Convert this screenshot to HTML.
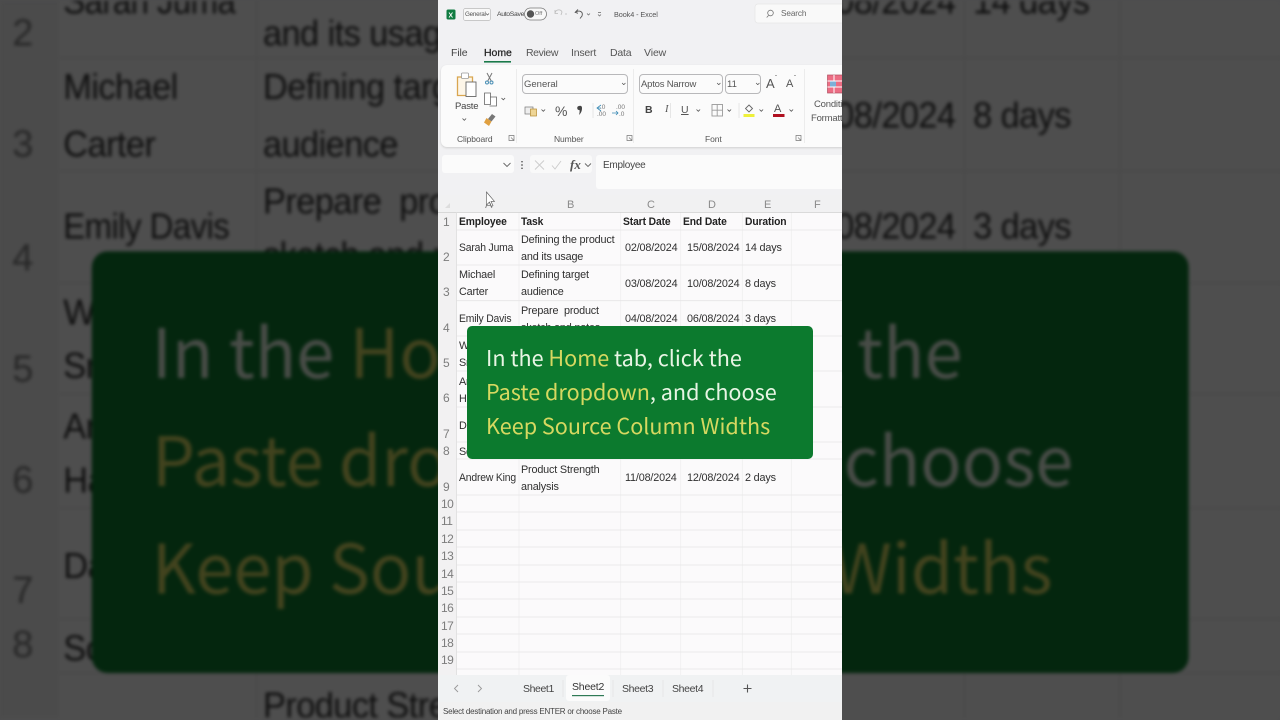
<!DOCTYPE html>
<html><head><meta charset="utf-8">
<style>
html,body{margin:0;padding:0;width:1280px;height:720px;overflow:hidden;background:#4d4d4e}
body{font-family:"Liberation Sans",sans-serif;position:relative}
#clip{position:absolute;left:0;top:0;width:1280px;height:720px;overflow:hidden;contain:strict}
.t{position:absolute;white-space:nowrap;line-height:1;color:#333}
#bg{position:absolute;left:438.1px;top:246.6px;width:403.8px;height:226.8px;overflow:hidden;background:#fbfafb;transform-origin:center center;transform:scale(3.17);filter:brightness(.31) blur(.55px)}
#bgi{position:absolute;left:-438.1px;top:-246.6px;width:0;height:0}
#frame{position:absolute;left:438px;top:0;width:404px;height:720px;overflow:hidden;background:#f1f1f3}
#inner{position:absolute;left:-438px;top:0;width:1280px;height:720px;filter:blur(.2px)}
.g{position:absolute;left:0;top:0;width:1280px;height:720px}
.c{font-size:11.4px;letter-spacing:-.18px;color:#303030;margin-top:1px;transform:scaleX(.95);transform-origin:0 0}
.n{transform:scaleX(.91)}
.b{font-weight:bold;color:#222;font-size:11.2px;letter-spacing:-.12px;margin-top:1px;transform:scaleX(.92);transform-origin:0 0}
.r{font-size:12px;color:#7d7d7d;letter-spacing:-.5px;margin-top:-1px}
.h{font-size:11px;color:#8a8a8a}
.m{font-size:9.5px;color:#444;letter-spacing:-.2px}
.s{font-size:8.5px;color:#555;letter-spacing:-.1px}
.box{position:absolute;border:1px solid #b8b8ba;border-radius:4px;background:#fbfbfb;box-sizing:border-box}
.cap{position:absolute;left:467px;top:326px;width:346px;height:133px;background:#0c7a2e;border-radius:5px}
.cap div{position:absolute;left:19px;white-space:nowrap;font-family:"Noto Sans CJK SC","DejaVu Sans",sans-serif;font-size:21.6px;line-height:1;color:#e8f5e4}
.y{color:#d6d860}
</style></head><body>
<div id="clip">

<div id="bg"><div id="bgi">
<svg style="position:absolute;left:438px;top:246px;width:404px;height:227px" viewBox="438 246 404 227"><g stroke="#e9e9e9" stroke-width=".5"><path d="M519 246V473M620.7 246V473M680.7 246V473M742.3 246V473M791.3 246V473M438 265H842M438 300.7H842M438 336H842M438 371H842M438 407H842M438 442H842M438 459H842"/></g><rect x="438" y="246" width="18.5" height="227" fill="#f2f1f2"/></svg>
<span class="t r" style="left:442px;top:252px">2</span><span class="t r" style="left:442px;top:287px">3</span><span class="t r" style="left:442px;top:323px">4</span><span class="t r" style="left:442px;top:358px">5</span><span class="t r" style="left:442px;top:393px">6</span><span class="t r" style="left:442px;top:428px">7</span><span class="t r" style="left:442px;top:445px">8</span>
<span class="t c n" style="left:458.5px;top:242px">Sarah Juma</span>
<span class="t c" style="left:521px;top:252px">and its usage</span>
<span class="t c" style="left:458.5px;top:269px">Michael</span><span class="t c" style="left:458.5px;top:287px">Carter</span>
<span class="t c" style="left:521px;top:269px">Defining target</span><span class="t c" style="left:521px;top:287px">audience</span>
<span class="t c n" style="left:458.5px;top:313px">Emily Davis</span>
<span class="t c" style="left:521px;top:305px">Prepare&nbsp; product</span><span class="t c" style="left:521px;top:322px">sketch and notes</span>
<span class="t c" style="left:458.5px;top:340px">W</span><span class="t c" style="left:458.5px;top:357px">Sm</span><span class="t c" style="left:458.5px;top:376px">An</span><span class="t c" style="left:458.5px;top:393px">Ha</span><span class="t c" style="left:458.5px;top:420px">Da</span><span class="t c" style="left:458.5px;top:446px">So</span>
<span class="t c" style="left:521px;top:464px;height:8px;overflow:hidden">Product Strength</span>
<span class="t c" style="left:625px;top:242px">02/08/2024</span><span class="t c" style="left:687px;top:242px">15/08/2024</span><span class="t c" style="left:745px;top:242px">14 days</span>
<span class="t c" style="left:625px;top:278px">03/08/2024</span><span class="t c" style="left:687px;top:278px">10/08/2024</span><span class="t c" style="left:745px;top:278px">8 days</span>
<span class="t c" style="left:625px;top:313px">04/08/2024</span><span class="t c" style="left:687px;top:313px">06/08/2024</span><span class="t c" style="left:745px;top:313px">3 days</span>
<span class="t c" style="left:625px;top:464px;height:8px;overflow:hidden;color:transparent">&nbsp;</span>
<div class="cap"><div style="top:21px">In the <span class="y">Home</span> tab, click the</div><div style="top:55px"><span class="y">Paste dropdown</span>, and choose</div><div style="top:89px"><span class="y">Keep Source Column Widths</span></div></div>
</div></div>

<div id="frame"><div id="inner">

<!-- title bar -->
<svg class="g" viewBox="0 0 1280 720">
<rect x="446.500" y="9.500" width="9" height="10" rx="1.500" fill="#107c41"/><path d="M449 12.500l3.500 5M452.500 12.500l-3.500 5" stroke="#fff" stroke-width=".9"/>
<rect x="463.500" y="8.500" width="27" height="12" rx="2" fill="#f8f8f8" stroke="#b9b9b9" stroke-width=".7"/>
<path d="M486 13.500l1.500 1.500 1.500-1.500" fill="none" stroke="#555" stroke-width=".7"/>
<rect x="524.500" y="8" width="22" height="12" rx="6" fill="#f8f8f8" stroke="#777" stroke-width=".8"/><circle cx="530.500" cy="14" r="3.700" fill="#555"/>
<path d="M555 13c1-4 6-4 7-1l-1 3M555 10v3.500h3M565 14h2" fill="none" stroke="#bbb" stroke-width=".8"/>
<path d="M578 9.500l-2.800 2.800 2.800 1M575.500 12c4-2 8-.5 6.500 4l-2 2.500" fill="none" stroke="#555" stroke-width=".9"/>
<path d="M587 13.500l1.500 1.500 1.500-1.500M598 12.500h3M598 14.500l1.500 1.500 1.500-1.500" fill="none" stroke="#666" stroke-width=".7"/>
<rect x="755" y="4" width="100" height="19" rx="3" fill="#f9f9f9" stroke="#e6e6e6" stroke-width=".7"/>
<circle cx="770.500" cy="13" r="2.800" fill="none" stroke="#777" stroke-width=".8"/><path d="M768.500 15.500l-1.800 2" stroke="#777" stroke-width=".8"/>
<rect x="484" y="61" width="27" height="1.600" fill="#1a7a4a"/>
</svg>
<span class="t" style="left:465px;top:11.500px;font-size:6.300px;color:#555;letter-spacing:-.25px">General</span>
<span class="t" style="left:497px;top:11.500px;font-size:6.800px;color:#444;letter-spacing:-.3px">AutoSave</span>
<span class="t" style="left:535px;top:11.500px;font-size:5.500px;color:#777">Off</span>
<span class="t" style="left:614px;top:10.500px;font-size:7.300px;color:#555;letter-spacing:-.1px">Book4 - Excel</span>
<span class="t" style="left:781px;top:10px;font-size:8.200px;color:#666;letter-spacing:-.1px">Search</span>

<!-- tabs -->
<span class="t" style="left:451px;top:47.500px;font-size:10.500px;color:#444;letter-spacing:-.1px">File</span>
<span class="t" style="left:484px;top:47.500px;font-size:10.500px;color:#222;-webkit-text-stroke:.25px #222;letter-spacing:-.05px">Home</span>
<span class="t" style="left:526px;top:47.500px;font-size:10.500px;color:#555;letter-spacing:-.4px">Review</span>
<span class="t" style="left:571px;top:47.500px;font-size:10.500px;color:#555;letter-spacing:-.2px">Insert</span>
<span class="t" style="left:610px;top:47.500px;font-size:10.500px;color:#555;letter-spacing:-.2px">Data</span>
<span class="t" style="left:644px;top:47.500px;font-size:10.500px;color:#555;letter-spacing:-.1px">View</span>

<!-- ribbon -->
<div style="position:absolute;left:441px;top:65px;width:401px;height:82px;background:#fbfbfb;border-radius:6px 0 0 6px;box-shadow:0 1px 2px #cfcfcf"></div>
<svg class="g" viewBox="0 0 1280 720">
<path d="M516.500 69V143M633.500 69V143M804.500 69V143" stroke="#e8e8e8" stroke-width=".8"/>
<path d="M457.500 77h15v18.500h-15z" fill="#fdf6e8" stroke="#d9a650" stroke-width="1.300"/><rect x="461.500" y="73" width="7" height="5.500" rx="1" fill="#fff" stroke="#999" stroke-width=".8"/>
<rect x="466" y="82" width="10" height="14.500" fill="#fff" stroke="#666" stroke-width=".9"/>
<path d="M487 73l4.500 8.500M492 73l-4.500 8.500" stroke="#777" stroke-width="1"/><circle cx="487" cy="82.500" r="1.500" fill="none" stroke="#4a8fb5"/><circle cx="491.500" cy="82.500" r="1.500" fill="none" stroke="#4a8fb5"/>
<path d="M484.500 93h6v11.500h-6zM490 97h6.500v9h-7" fill="#fff" stroke="#666" stroke-width=".8"/>
<path d="M501.500 98l1.800 1.800 1.800-1.800M462.500 118.500l1.800 1.800 1.800-1.800" fill="none" stroke="#555" stroke-width=".8"/>
<path d="M492 114l3.500 2.500-4 5-3.500-2.500z" fill="#777"/><path d="M486.500 118l5 3.500-2.500 4.500-5-3.500z" fill="#e0a040"/>
<rect x="525" y="107" width="8" height="7" fill="#eee" stroke="#777" stroke-width=".7"/><rect x="530.500" y="109" width="6" height="7" fill="#eed596" stroke="#b58a30" stroke-width=".7"/>
<path d="M541.500 109.500l1.800 1.800 1.800-1.800M696.500 109.500l1.800 1.800 1.800-1.800M727.500 109.500l1.800 1.800 1.800-1.800M759.500 109.500l1.800 1.800 1.800-1.800M789.500 109.500l1.800 1.800 1.800-1.800" fill="none" stroke="#555" stroke-width=".8"/>
<path d="M593 103V118M670.500 103V118M739 103V118" stroke="#e2e2e2" stroke-width=".8"/>
<path d="M601 105l-4 3 4 3M597 108h4" fill="none" stroke="#3b8bb5" stroke-width=".8"/>
<path d="M616 111l2 2-2 2M612 113h6" fill="none" stroke="#3b8bb5" stroke-width=".8"/>
<rect x="712" y="104.500" width="10.500" height="11.500" fill="none" stroke="#999" stroke-width=".9"/><path d="M717.200 104.500V116M712 110.200H722.500" stroke="#999" stroke-width=".9"/>
<path d="M749 105l3.500 3.500-3.500 3.500-3.500-3.500z" fill="none" stroke="#666" stroke-width=".9"/><rect x="743.500" y="114" width="11" height="3" fill="#eef03a"/>
<rect x="773" y="114" width="11.500" height="3" fill="#b01020"/>
<path d="M509 135.500h5v5h-5zM511 137.500l3 3M627 135.500h5v5h-5zM629 137.500l3 3M796 135.500h5v5h-5zM798 137.500l3 3" fill="none" stroke="#777" stroke-width=".7"/>
<rect x="827.500" y="75" width="20" height="18" fill="#ec6d84" stroke="#b05060" stroke-width=".7"/><path d="M827.500 81h20M827.500 87h20M834 75v18" stroke="#fff" stroke-width="1"/><rect x="830" y="81.500" width="6" height="5" fill="#7cb0d8"/>
<path d="M579 106a2 2 0 0 1 3 2c0 3-1 5-3 7c.5-2 .8-3 .5-5a2 2 0 0 1-.5-4z" fill="#444"/>
</svg>
<span class="t m" style="left:455px;top:102px">Paste</span>
<span class="t s" style="left:457px;top:135px">Clipboard</span>
<span class="t s" style="left:554px;top:135px">Number</span>
<span class="t s" style="left:705px;top:135px">Font</span>
<div class="box" style="left:522px;top:74px;width:106px;height:20px"></div>
<span class="t" style="left:524px;top:80px;font-size:9.500px;color:#555">General</span>
<span class="t" style="left:620px;top:78px;font-size:9px;color:#555">⌄</span>
<div class="box" style="left:639px;top:74px;width:84px;height:20px"></div>
<span class="t" style="left:641px;top:80px;font-size:9.500px;color:#555;letter-spacing:-.2px">Aptos Narrow</span>
<span class="t" style="left:715px;top:78px;font-size:9px;color:#555">⌄</span>
<div class="box" style="left:725px;top:74px;width:36px;height:20px"></div>
<span class="t" style="left:727px;top:80px;font-size:9.500px;color:#555">11</span>
<span class="t" style="left:754px;top:78px;font-size:9px;color:#555">⌄</span>
<span class="t" style="left:766px;top:77px;font-size:13px;color:#555">A</span><span class="t" style="left:775px;top:76px;font-size:6px;color:#555">ˆ</span>
<span class="t" style="left:786px;top:79px;font-size:11px;color:#555">A</span><span class="t" style="left:794px;top:76px;font-size:6px;color:#555">ˇ</span>
<span class="t" style="left:555px;top:104px;font-size:14px;color:#555">%</span>
<span class="t" style="left:600px;top:105px;font-size:6.500px;color:#777">.0</span><span class="t" style="left:597px;top:112px;font-size:6.500px;color:#777">.00</span>
<span class="t" style="left:616px;top:105px;font-size:6.500px;color:#777">.00</span><span class="t" style="left:619px;top:112px;font-size:6.500px;color:#777">.0</span>
<span class="t" style="left:645px;top:105px;font-size:10.500px;font-weight:bold;color:#444">B</span>
<span class="t" style="left:665px;top:105px;font-size:10.500px;font-style:italic;color:#555;font-family:'Liberation Serif',serif">I</span>
<span class="t" style="left:681px;top:105px;font-size:10.500px;color:#555;text-decoration:underline">U</span>
<span class="t" style="left:774px;top:104px;font-size:11px;color:#555">A</span>
<span class="t" style="left:814px;top:100px;width:28px;overflow:hidden;font-size:9.500px;color:#555;letter-spacing:-.2px">Conditional</span>
<span class="t" style="left:811px;top:114px;width:31px;overflow:hidden;font-size:9.500px;color:#555;letter-spacing:-.2px">Formatting</span>

<!-- formula bar -->
<div style="position:absolute;left:442px;top:155px;width:72px;height:18px;background:#fbfbfb;border-radius:3px"></div>
<div style="position:absolute;left:530px;top:155px;width:62px;height:18px;background:#f9f9f9;border-radius:3px"></div>
<div style="position:absolute;left:596px;top:155px;width:246px;height:34px;background:#fbfbfb;border-radius:3px 0 0 3px"></div>
<svg class="g" viewBox="0 0 1280 720">
<path d="M503.500 163l3.500 3.500 3.500-3.500M585 163.500l3 3 3-3" fill="none" stroke="#666" stroke-width=".9"/>
<path d="M522 161v1.400M522 164.300v1.400M522 167.600v1.400" stroke="#444" stroke-width="1.300"/>
<path d="M535 160.500l9 9M544 160.500l-9 9M552 165.500l3 3.500 6-8" fill="none" stroke="#ccc" stroke-width=".9"/>
</svg>
<span class="t" style="left:570px;top:158px;font-size:13px;font-style:italic;font-weight:bold;color:#555;font-family:'Liberation Serif',serif">fx</span>
<span class="t" style="left:603px;top:160.500px;font-size:10px;color:#444;letter-spacing:-.25px">Employee</span>

<!-- grid -->
<div style="position:absolute;left:438px;top:212px;width:404px;height:463px;background:#fbfafb"></div>
<svg class="g" viewBox="0 0 1280 720">
<rect x="438" y="195" width="404" height="17" fill="#f1f1f2"/><rect x="438" y="212" width="18.500" height="463" fill="#f2f1f2"/>
<path d="M445 208l5-5v5z" fill="#ddd"/>
<g stroke="#efeeef" stroke-width=".8">
<path d="M519 212V675M620.700 212V675M680.700 212V675M742.300 212V675M791.300 212V675"/>
</g>
<g stroke="#e6e5e6" stroke-width=".8">
<path d="M456.500 230H842M456.500 265H842M456.500 300.700H842M456.500 336H842M456.500 371H842M456.500 407H842M456.500 442H842M456.500 459H842M456.500 495H842M456.500 512H842M456.500 530H842M456.500 547H842M456.500 565H842M456.500 582H842M456.500 599H842M456.500 617H842M456.500 634H842M456.500 652H842M456.500 669H842"/>
</g>
<path d="M438 212.400H842" stroke="#cfcfd0" stroke-width=".8"/>
<path d="M456.500 212V675" stroke="#dedede" stroke-width=".8"/>
</svg>
<span class="t h" style="left:485px;top:200px">A</span><span class="t h" style="left:567px;top:200px">B</span><span class="t h" style="left:647px;top:200px">C</span><span class="t h" style="left:708px;top:200px">D</span><span class="t h" style="left:764px;top:200px">E</span><span class="t h" style="left:814px;top:200px">F</span>
<svg class="g" viewBox="0 0 1280 720"><path d="M486.500 192v13l3-3 2 4.500 1.500-.8-2-4.300h3.500z" fill="#fff" stroke="#555" stroke-width=".6"/></svg>

<span class="t r" style="left:443px;top:217px">1</span><span class="t r" style="left:443px;top:252px">2</span><span class="t r" style="left:443px;top:287px">3</span><span class="t r" style="left:443px;top:323px">4</span><span class="t r" style="left:443px;top:358px">5</span><span class="t r" style="left:443px;top:393px">6</span><span class="t r" style="left:443px;top:429px">7</span><span class="t r" style="left:443px;top:446px">8</span><span class="t r" style="left:443px;top:482px">9</span>
<span class="t r" style="left:441px;top:499px">10</span><span class="t r" style="left:441px;top:516px">11</span><span class="t r" style="left:441px;top:534px">12</span><span class="t r" style="left:441px;top:551px">13</span><span class="t r" style="left:441px;top:569px">14</span><span class="t r" style="left:441px;top:586px">15</span><span class="t r" style="left:441px;top:603px">16</span><span class="t r" style="left:441px;top:621px">17</span><span class="t r" style="left:441px;top:638px">18</span><span class="t r" style="left:441px;top:655px">19</span>

<span class="t b" style="left:458.500px;top:216px">Employee</span><span class="t b" style="left:521px;top:216px">Task</span><span class="t b" style="left:623px;top:216px">Start Date</span><span class="t b" style="left:683px;top:216px">End Date</span><span class="t b" style="left:745px;top:216px">Duration</span>

<span class="t c n" style="left:458.500px;top:242px">Sarah Juma</span>
<span class="t c" style="left:521px;top:234px">Defining the product</span><span class="t c" style="left:521px;top:251px">and its usage</span>
<span class="t c" style="left:458.500px;top:269px">Michael</span><span class="t c" style="left:458.500px;top:286px">Carter</span>
<span class="t c" style="left:521px;top:269px">Defining target</span><span class="t c" style="left:521px;top:286px">audience</span>
<span class="t c n" style="left:458.500px;top:313px">Emily Davis</span>
<span class="t c" style="left:521px;top:305px">Prepare&nbsp; product</span><span class="t c" style="left:521px;top:322px">sketch and notes</span>
<span class="t c" style="left:458.500px;top:340px">W</span><span class="t c" style="left:458.500px;top:357px">Sm</span><span class="t c" style="left:458.500px;top:376px">An</span><span class="t c" style="left:458.500px;top:393px">Ha</span><span class="t c" style="left:458.500px;top:420px">Da</span><span class="t c" style="left:458.500px;top:446px">So</span>
<span class="t c n" style="left:458.500px;top:472px">Andrew King</span>
<span class="t c" style="left:521px;top:464px">Product Strength</span><span class="t c" style="left:521px;top:481px">analysis</span>
<span class="t c" style="left:625px;top:242px">02/08/2024</span><span class="t c" style="left:687px;top:242px">15/08/2024</span><span class="t c" style="left:745px;top:242px">14 days</span>
<span class="t c" style="left:625px;top:278px">03/08/2024</span><span class="t c" style="left:687px;top:278px">10/08/2024</span><span class="t c" style="left:745px;top:278px">8 days</span>
<span class="t c" style="left:625px;top:313px">04/08/2024</span><span class="t c" style="left:687px;top:313px">06/08/2024</span><span class="t c" style="left:745px;top:313px">3 days</span>
<span class="t c" style="left:625px;top:472px">11/08/2024</span><span class="t c" style="left:687px;top:472px">12/08/2024</span><span class="t c" style="left:745px;top:472px">2 days</span>

<!-- sheet tabs -->
<div style="position:absolute;left:438px;top:675px;width:404px;height:27px;background:#f0f2f3"></div>
<div style="position:absolute;left:438px;top:702px;width:404px;height:18px;background:#f1f1f1"></div>
<div style="position:absolute;left:566px;top:675px;width:44px;height:26px;background:#fbfbfb;border-radius:3px"></div>
<svg class="g" viewBox="0 0 1280 720">
<path d="M458 685l-3.500 3.500 3.500 3.500M478 685l3.500 3.500-3.500 3.500" fill="none" stroke="#999" stroke-width=".9"/>
<path d="M563 680V697M613 680V697M663 680V697M713 680V697" stroke="#e4e4e4" stroke-width=".8"/>
<rect x="572" y="695" width="32" height="1.200" fill="#2f7a55"/>
<path d="M747.500 684.500v8M743.500 688.500h8" stroke="#555" stroke-width="1.100"/>
</svg>
<span class="t" style="left:523px;top:684px;font-size:10.500px;color:#444;letter-spacing:-.4px">Sheet1</span>
<span class="t" style="left:572px;top:682px;font-size:10.500px;color:#333;letter-spacing:-.2px">Sheet2</span>
<span class="t" style="left:622px;top:684px;font-size:10.500px;color:#444;letter-spacing:-.35px">Sheet3</span>
<span class="t" style="left:672px;top:684px;font-size:10.500px;color:#444;letter-spacing:-.35px">Sheet4</span>
<span class="t" style="left:443px;top:708px;font-size:8px;color:#444;letter-spacing:-.22px">Select destination and press ENTER or choose Paste</span>

<div class="cap"><div style="top:21px">In the <span class="y">Home</span> tab, click the</div><div style="top:55px"><span class="y">Paste dropdown</span>, and choose</div><div style="top:89px"><span class="y">Keep Source Column Widths</span></div></div>

</div></div>
</div>
</body></html>
